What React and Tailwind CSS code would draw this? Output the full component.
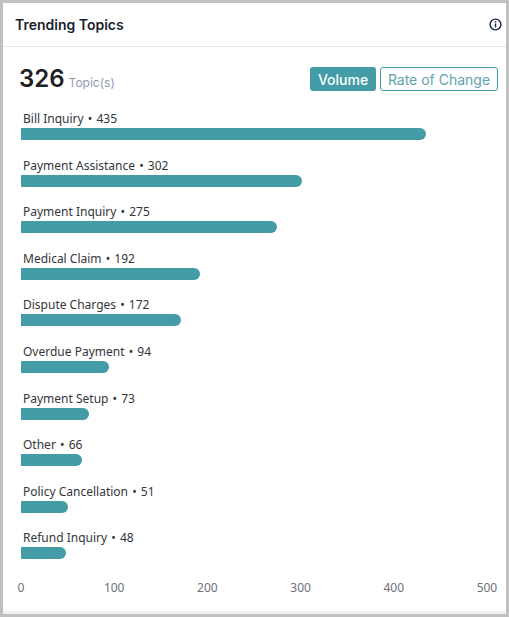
import React from 'react';

const topics = [
  { name: 'Bill Inquiry', count: 435 },
  { name: 'Payment Assistance', count: 302 },
  { name: 'Payment Inquiry', count: 275 },
  { name: 'Medical Claim', count: 192 },
  { name: 'Dispute Charges', count: 172 },
  { name: 'Overdue Payment', count: 94 },
  { name: 'Payment Setup', count: 73 },
  { name: 'Other', count: 66 },
  { name: 'Policy Cancellation', count: 51 },
  { name: 'Refund Inquiry', count: 48 },
];

const ticks = [0, 100, 200, 300, 400, 500];

function InfoIcon() {
  return (
    <svg width="13" height="13" viewBox="0 0 13 13" fill="none">
      <circle cx="6.5" cy="6.5" r="5.4" stroke="#15233f" strokeWidth="1.4" />
      <rect x="5.8" y="5.5" width="1.4" height="4" fill="#15233f" />
      <rect x="5.8" y="3.2" width="1.4" height="1.4" fill="#15233f" />
    </svg>
  );
}

export default function App() {
  return (
    <div className="w-[509px] h-[617px] bg-[#c0c0c0] p-[3px] font-['Inter',sans-serif]">
      <div className="h-full bg-[#f0f0f0] pb-[3px]">
        <div className="h-full bg-white flex flex-col">
          <div className="h-[44px] border-b border-[#e8e8f2] flex items-center justify-between pl-[12px] pr-[4px] shrink-0">
            <span className="text-[14px] font-semibold text-[#1a1f2b]">Trending Topics</span>
            <InfoIcon />
          </div>

          <div className="flex items-center justify-between pl-[16px] pr-[8px] h-[64px] shrink-0">
            <div className="flex items-baseline gap-[4px] mt-[1px]">
              <span className="text-[24px] font-semibold text-[#1f2023] leading-none">326</span>
              <span className="text-[12px] text-[#8f99b0]">Topic(s)</span>
            </div>
            <div className="flex gap-[4px]">
              <button className="h-[24px] w-[66px] rounded-[3px] bg-[#439ca6] text-white text-[14px] font-medium">Volume</button>
              <button className="h-[24px] w-[118px] rounded-[3px] border border-[#439ca6] bg-white text-[#5fa3ad] text-[14px]">Rate of Change</button>
            </div>
          </div>

          <div className="flex flex-col pl-[18px]">
            {topics.map((t) => (
              <div key={t.name} className="h-[46.6px] flex flex-col">
                <div className="pl-[2px] h-[17px] text-[12px] leading-[15px] text-[#33363b] font-['Noto_Sans',sans-serif]">
                  {t.name} <span className="px-[1px]">•</span> {t.count}
                </div>
                <div className="h-[12px] bg-[#439ca6] rounded-r-full" style={{ width: t.count * 0.931 }} />
              </div>
            ))}
          </div>

          <div className="flex justify-between ml-[18px] mr-[19px] mt-[3px] text-[12px] leading-[16px] text-[#6e7079] font-['Noto_Sans',sans-serif]">
            {ticks.map((v) => (
              <span key={v} className="w-0 flex justify-center">{v}</span>
            ))}
          </div>
        </div>
      </div>
    </div>
  );
}
